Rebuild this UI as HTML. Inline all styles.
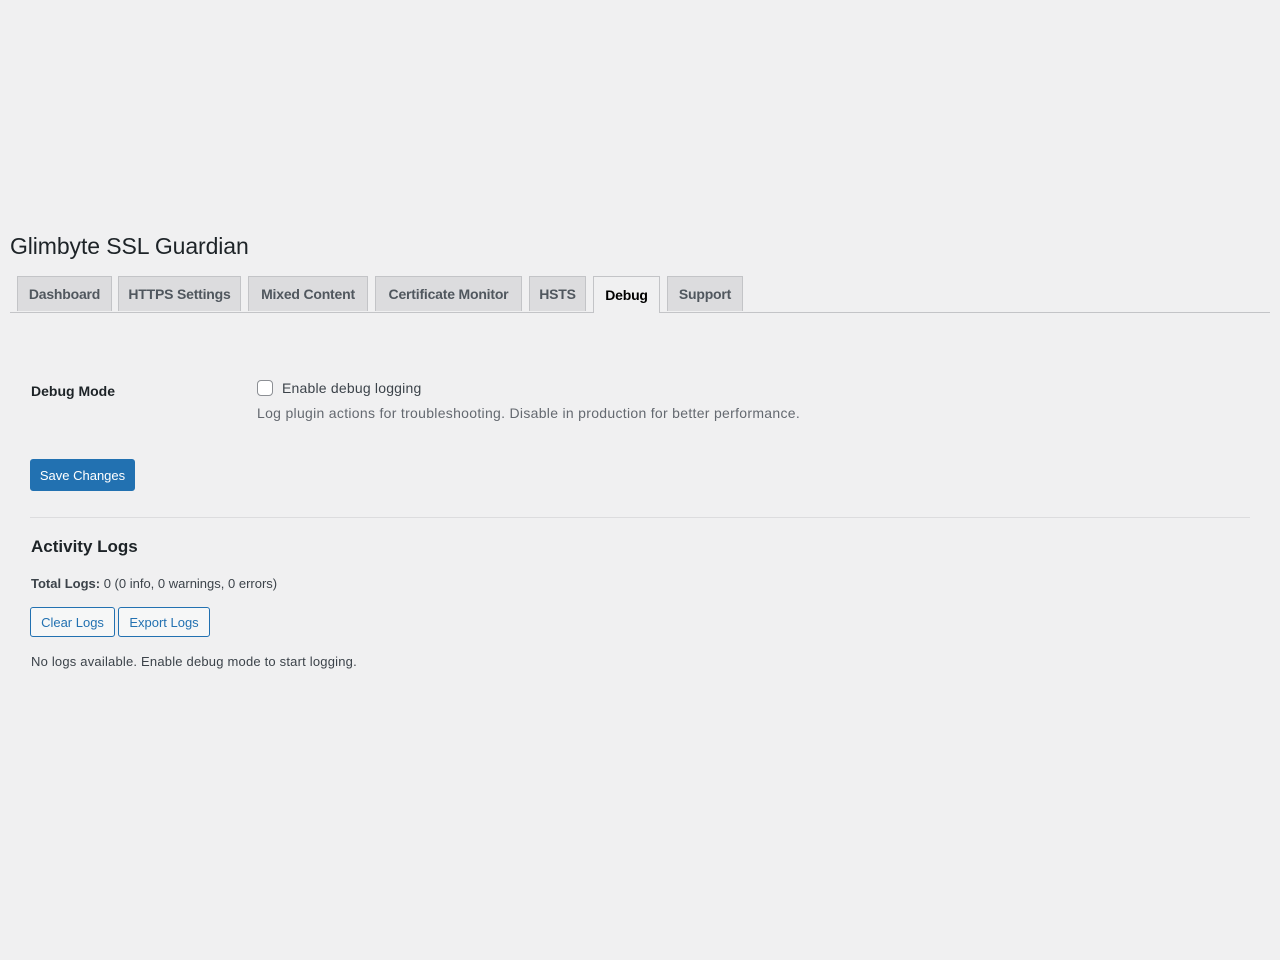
<!DOCTYPE html>
<html><head><style>
body{margin:0;background:#f0f0f1;font-family:"Liberation Sans",sans-serif;color:#1d2327;width:1280px;height:960px;position:relative;overflow:hidden}
.a{position:absolute;white-space:nowrap}
h1{position:absolute;left:10px;top:233px;margin:0;font-size:23px;font-weight:400;color:#1d2327;letter-spacing:-0.1px}
.tab{position:absolute;top:276px;height:35px;border:1px solid #c3c4c7;border-bottom:none;background:#dcdcde;color:#50575e;font-size:14px;font-weight:600;display:flex;align-items:center;justify-content:center;box-sizing:border-box;letter-spacing:-0.2px}
.tab.on{background:#f0f0f1;color:#000;height:37px}
.line{position:absolute;left:10px;width:1260px;top:312px;height:1px;background:#c3c4c7}
.btn{position:absolute;box-sizing:border-box;border-radius:3px;font-size:13px;display:flex;align-items:center;justify-content:center}
</style></head><body>
<h1>Glimbyte SSL Guardian</h1>
<div class="line"></div>
<div class="tab" style="left:17px;width:95px">Dashboard</div>
<div class="tab" style="left:118px;width:123px">HTTPS Settings</div>
<div class="tab" style="left:248px;width:120px">Mixed Content</div>
<div class="tab" style="left:375px;width:147px">Certificate Monitor</div>
<div class="tab" style="left:529px;width:57px">HSTS</div>
<div class="tab on" style="left:593px;width:67px">Debug</div>
<div class="tab" style="left:667px;width:76px">Support</div>

<div class="a" style="left:31px;top:383px;font-size:14px;font-weight:600">Debug Mode</div>
<div class="a" style="left:257px;top:380px;border:1px solid #8c8f94;border-radius:4px;background:#fff;box-sizing:border-box;width:16px;height:16px"></div>
<div class="a" style="left:282px;top:380px;font-size:14px;color:#3c434a;letter-spacing:0.2px">Enable debug logging</div>
<div class="a" style="left:257px;top:405px;font-size:14px;color:#646970;letter-spacing:0.3px">Log plugin actions for troubleshooting. Disable in production for better performance.</div>

<div class="btn" style="left:30px;top:459px;width:105px;height:32px;background:#2271b1;color:#fff;border:1px solid #2271b1">Save Changes</div>
<div class="a" style="left:30px;top:517px;width:1220px;height:1px;background:#dcdcde"></div>
<div class="a" style="left:31px;top:537px;font-size:17px;font-weight:600">Activity Logs</div>
<div class="a" style="left:31px;top:576px;font-size:13px;color:#3c434a"><b>Total Logs:</b> 0 (0 info, 0 warnings, 0 errors)</div>
<div class="btn" style="left:30px;top:607px;width:85px;height:30px;border:1px solid #2271b1;color:#2271b1;background:#f6f7f7">Clear Logs</div>
<div class="btn" style="left:118px;top:607px;width:92px;height:30px;border:1px solid #2271b1;color:#2271b1;background:#f6f7f7">Export Logs</div>
<div class="a" style="left:31px;top:654px;font-size:13px;color:#3c434a;letter-spacing:0.2px">No logs available. Enable debug mode to start logging.</div>
</body></html>
